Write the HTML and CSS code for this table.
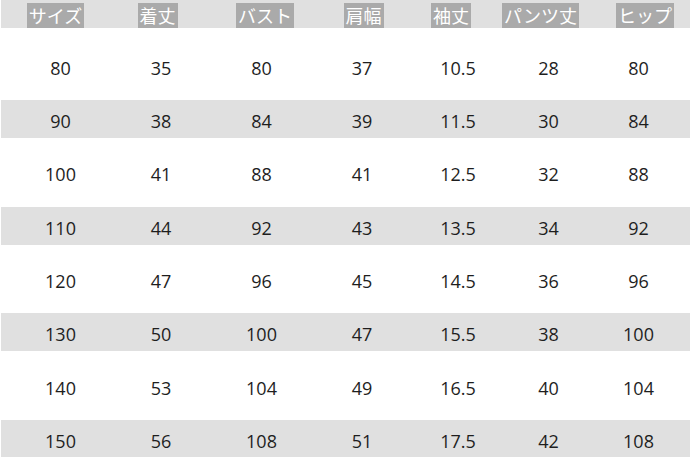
FILE: index.html
```html
<!DOCTYPE html>
<html lang="ja">
<head>
<meta charset="utf-8">
<title>サイズ表</title>
<link rel="stylesheet" href="styles.css">
</head>
<body>
<div class="chart">
  <div class="head">
    <span class="label">サイズ</span>
    <span class="label">着丈</span>
    <span class="label">バスト</span>
    <span class="label">肩幅</span>
    <span class="label">袖丈</span>
    <span class="label">パンツ丈</span>
    <span class="label">ヒップ</span>
  </div>
  <div class="rows">
    <div class="row"><span>80</span><span>35</span><span>80</span><span>37</span><span>10.5</span><span>28</span><span>80</span></div>
    <div class="row alt"><span>90</span><span>38</span><span>84</span><span>39</span><span>11.5</span><span>30</span><span>84</span></div>
    <div class="row"><span>100</span><span>41</span><span>88</span><span>41</span><span>12.5</span><span>32</span><span>88</span></div>
    <div class="row alt"><span>110</span><span>44</span><span>92</span><span>43</span><span>13.5</span><span>34</span><span>92</span></div>
    <div class="row"><span>120</span><span>47</span><span>96</span><span>45</span><span>14.5</span><span>36</span><span>96</span></div>
    <div class="row alt"><span>130</span><span>50</span><span>100</span><span>47</span><span>15.5</span><span>38</span><span>100</span></div>
    <div class="row"><span>140</span><span>53</span><span>104</span><span>49</span><span>16.5</span><span>40</span><span>104</span></div>
    <div class="row alt"><span>150</span><span>56</span><span>108</span><span>51</span><span>17.5</span><span>42</span><span>108</span></div>
  </div>
</div>
</body>
</html>
```
FILE: styles.css
```css
html, body {
  margin: 0;
  padding: 0;
  background: #ffffff;
}

body {
  font-family: "Noto Sans CJK JP", "Noto Sans", sans-serif;
  color: #1e1e1e;
  width: 690px;
  height: 457px;
  overflow: hidden;
}

.chart {
  padding-left: 1px;
}

.head {
  display: grid;
  grid-template-columns: 91px 113px 102px 95px 80px 99px 110px;
  padding-left: 9px;
  height: 28px;
  background: #e0e0e0;
  align-items: end;
  justify-items: center;
  overflow: hidden;
}

.label {
  display: block;
  background: #aaaaaa;
  color: #ffffff;
  font-size: 18px;
  line-height: 25px;
  height: 25px;
  padding: 0 2px;
  letter-spacing: 0;
}

.rows {
  display: grid;
  row-gap: 15.33px;
  padding-top: 18.7px;
}

.row {
  display: grid;
  grid-template-columns: 101px 100px 101px 100px 92px 89px 91px;
  padding-left: 9px;
  height: 38px;
  box-sizing: border-box;
  padding-top: 4px;
  line-height: 34px;
  font-family: "Open Sans", "Noto Sans CJK JP", sans-serif;
  font-size: 18px;
  justify-items: center;
}

.row.alt {
  background: #e0e0e0;
}
```
